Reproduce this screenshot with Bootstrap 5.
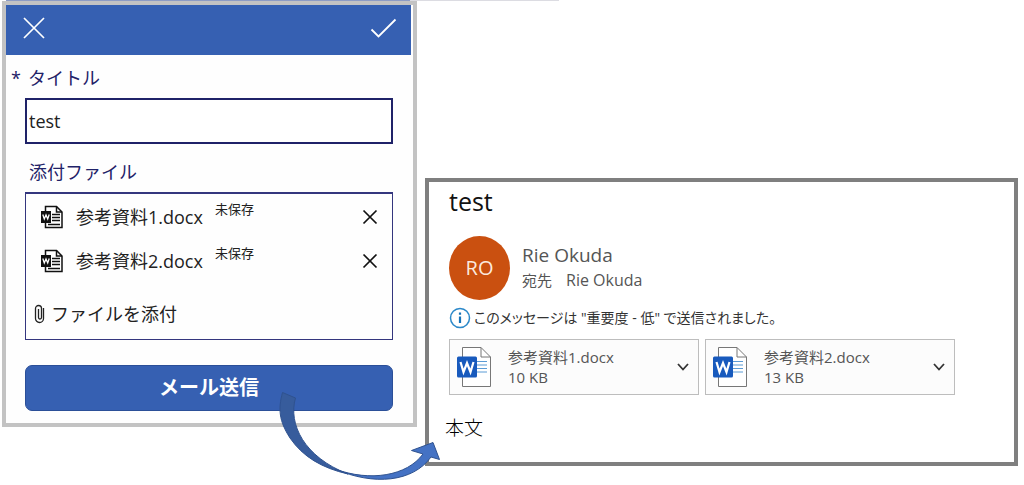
<!DOCTYPE html>
<html lang="ja">
<head>
<meta charset="utf-8">
<meta name="viewport" content="width=device-width, initial-scale=1">
<title>メール送信</title>
<link href="https://cdn.jsdelivr.net/npm/bootstrap@5.3.0/dist/css/bootstrap.min.css" rel="stylesheet">
<style>
  body { font-family: "Open Sans", "Noto Sans CJK JP", sans-serif; color: #222; background: #fff; }
  .top-rule { height: 1px; width: 54%; background: linear-gradient(90deg, #8d9cc4 73%, #dcdce2 73%); margin-left: 6px; }
  .stage { gap: 8px; padding: 0 6px 18px 2px; }
  .form-pane { flex: 405 1 0; min-width: 0; border: 4px solid #c3c3c3; padding-right: 2px; background: #fefefe; }
  .mail-pane { flex: 553 1 0; min-width: 0; border: 4px solid #7f7f7f; margin-top: 177px; padding: 2px 16px 20px; }
  .form-bar { background: #3660b2; height: 50px; padding: 0 14px 4px 16px; }
  .bare { background: none; border: 0; padding: 0; line-height: 0; }
  .form-body { padding: 11px 18px 12px 19px; }
  .navy { color: #1f2268; }
  .fs-18 { font-size: 18px; line-height: 24px; }
  .fs-15 { font-size: 15px; line-height: 20px; }
  .fs-13 { font-size: 13px; line-height: 20px; }
  .star { width: 16px; margin-left: -14px; margin-right: 1px; }
  .title-input { border: 2px solid #1f2268; border-radius: 0; height: 46px; padding: 0 2px; font-size: 18px; color: #222; }
  .file-box { border: 1px solid #34367e; border-top-width: 2px; padding: 1px 14px 13px 8px; margin-bottom: 25px; }
  .file-row { height: 44px; padding-left: 6px; }
  .add-file { margin-top: 19px; gap: 6px; }
  .send { background: #3660b2; border: 1px solid #2b4f98; border-radius: 7px; height: 46px; font-size: 20px; line-height: 24px; font-weight: 700; color: #fff; }
  .send:hover { background: #2f56a3; color: #fff; }
  .flow-arrow { right: -30px; bottom: -62px; pointer-events: none; z-index: 2; }
  .subject { font-size: 25px; line-height: 34px; color: #111; margin-bottom: 18px; }
  .avatar { width: 61px; height: 64px; background: #ca5010; color: #fbe9df; font-size: 20px; border-radius: 50%; }
  .sender { font-size: 19px; line-height: 24px; }
  .recipient { font-size: 16px; line-height: 26px; }
  .recipient span { font-size: 15px; margin-right: 14px; }
  .notice { font-size: 14px; line-height: 20px; font-feature-settings: "palt"; color: #333; margin: 7px 0 10px; gap: 3px; }
  .soft { color: #555; }
  .attach { flex: 0 1 250px; height: 56px; border: 1px solid #bdbdbd; background: #fcfcfc; padding: 0 8px 0 6px; min-width: 0; }
  .attach-list { gap: 6px; }
  .message { font-size: 19px; line-height: 28px; font-weight: 300; color: #000; margin: 19px 0 0; }
</style>
</head>
<body>
<svg class="d-none" aria-hidden="true">
  <symbol id="cross" viewBox="0 0 22 22"><path d="M1 1 21 21M21 1 1 21" fill="none" stroke="currentColor" stroke-width="1.700"/></symbol>
  <symbol id="doc-dark" viewBox="0 0 24 24">
    <path d="M5.500 1.500H16.500L22 7V22.500H5.500Z" fill="#fff" stroke="#111" stroke-width="1.500"/>
    <path d="M16.500 1.500V7H22" fill="none" stroke="#111" stroke-width="1.500"/>
    <path d="M12 9.500H20M12 12.500H20M12 15.500H20M8 19.500H20" stroke="#111" stroke-width="1.300"/>
    <path d="M1 6H11V18H1Z" fill="#111"/>
    <path d="M2.800 9.500 4.300 14 6 10 7.700 14 9.200 9.500" fill="none" stroke="#fff" stroke-width="1.300"/>
  </symbol>
  <symbol id="doc-blue" viewBox="0 0 36 42">
    <path d="M6.500 1.500H25L34.500 11V40.500H6.500Z" fill="#fff" stroke="#777"/>
    <path d="M25 1.500V11H34.500" fill="none" stroke="#777"/>
    <path d="M21 15.500H31M21 19H31M21 22.500H31M21 26H31" stroke="#5b9bd5"/>
    <rect x="1" y="10.500" width="20" height="21" rx="1.500" fill="#185abd"/>
    <path d="M4.500 16 7.500 26 11 17 14.500 26 17.500 16" fill="none" stroke="#fff" stroke-width="2.200"/>
  </symbol>
</svg>

<div class="top-rule"></div>
<main class="stage d-flex align-items-start">
  <form class="form-pane position-relative" onsubmit="return false">
    <div class="form-bar d-flex justify-content-between align-items-center text-white">
      <button type="button" class="bare text-white" aria-label="閉じる"><svg width="24" height="22"><use href="#cross"/></svg></button>
      <button type="button" class="bare text-white" aria-label="保存"><svg width="27" height="22" viewBox="0 0 27 22"><path d="M1.500 12.500 8.500 19.500 25.500 2.500" fill="none" stroke="currentColor" stroke-width="1.800"/></svg></button>
    </div>
    <div class="form-body">
      <div class="d-flex fs-18 navy mb-2">
        <span class="star" aria-hidden="true">*</span><label for="title">タイトル</label>
      </div>
      <input id="title" type="text" class="form-control title-input" value="test">
      <div class="fs-18 navy mt-3 mb-2 ps-1">添付ファイル</div>
      <div class="file-box">
        <div class="file-row d-flex align-items-center">
          <svg width="24" height="24" class="flex-shrink-0"><use href="#doc-dark"/></svg>
          <span class="fs-18 ms-2 ps-1">参考資料1.docx</span>
          <span class="fs-13 ms-2 ps-1 mb-3">未保存</span>
          <button type="button" class="bare ms-auto" aria-label="参考資料1.docxを削除"><svg width="16" height="16" viewBox="0 0 16 16"><path d="M1.500 1.500 14.500 14.500M14.500 1.500 1.500 14.500" stroke="#111" stroke-width="1.700"/></svg></button>
        </div>
        <div class="file-row d-flex align-items-center">
          <svg width="24" height="24" class="flex-shrink-0"><use href="#doc-dark"/></svg>
          <span class="fs-18 ms-2 ps-1">参考資料2.docx</span>
          <span class="fs-13 ms-2 ps-1 mb-3">未保存</span>
          <button type="button" class="bare ms-auto" aria-label="参考資料2.docxを削除"><svg width="16" height="16" viewBox="0 0 16 16"><path d="M1.500 1.500 14.500 14.500M14.500 1.500 1.500 14.500" stroke="#111" stroke-width="1.700"/></svg></button>
        </div>
        <button type="button" class="bare add-file d-flex align-items-center fs-18 text-reset">
          <svg width="11" height="20" viewBox="0 0 11 20"><path d="M9.500 4V14.500A4 4 0 0 1 1.500 14.500V4.500A3 3 0 0 1 7.500 4.500V13.500A1.500 1.500 0 0 1 4.500 13.500V5" fill="none" stroke="#222" stroke-width="1.300"/></svg>
          <span>ファイルを添付</span>
        </button>
      </div>
      <button type="submit" class="btn send w-100 d-block py-0">メール送信</button>
    </div>
    <svg class="flow-arrow position-absolute" width="165" height="95" viewBox="278 390 165 95" aria-hidden="true">
      <path d="M282.500 392.500 295.500 398C288 424 304 457 348 474C322 468 303 457 290 438C279 421 278 409 282.500 392.500Z" fill="#375c9c" stroke="#2f528f"/>
      <path d="M335 469C370 482 407 476 423 454L411.500 450.500 433 442.500 439.500 459.500 431 457C413 482 374 486 335 469Z" fill="#4472c4" stroke="#2f528f"/>
    </svg>
  </form>

  <section class="mail-pane">
    <div class="ps-1">
      <h1 class="subject fw-normal">test</h1>
      <div class="d-flex align-items-center">
        <div class="avatar d-flex align-items-center justify-content-center flex-shrink-0">RO</div>
        <div class="ms-2 ps-1">
          <div class="sender soft">Rie Okuda</div>
          <div class="recipient soft"><span>宛先</span>Rie Okuda</div>
        </div>
      </div>
      <div class="notice d-flex align-items-center">
        <svg width="22" height="22" viewBox="0 0 22 22" class="flex-shrink-0"><circle cx="11" cy="11" r="9.500" fill="#fff" stroke="#2b88c9" stroke-width="1.500"/><path d="M11 9.500V16M11 5.500V7.800" stroke="#1673b8" stroke-width="2.200"/></svg>
        <span>このメッセージは "重要度 - 低" で送信されました。</span>
      </div>
      <div class="attach-list d-flex">
        <div class="attach d-flex align-items-center">
          <svg width="36" height="42" class="flex-shrink-0"><use href="#doc-blue"/></svg>
          <div class="fs-15 ms-3 soft">参考資料1.docx<br>10 KB</div>
          <button type="button" class="bare ms-auto" aria-label="添付ファイルのメニュー"><svg width="14" height="10" viewBox="0 0 14 10"><path d="M2 2 7 7.500 12 2" fill="none" stroke="#333" stroke-width="1.800"/></svg></button>
        </div>
        <div class="attach d-flex align-items-center">
          <svg width="36" height="42" class="flex-shrink-0"><use href="#doc-blue"/></svg>
          <div class="fs-15 ms-3 soft">参考資料2.docx<br>13 KB</div>
          <button type="button" class="bare ms-auto" aria-label="添付ファイルのメニュー"><svg width="14" height="10" viewBox="0 0 14 10"><path d="M2 2 7 7.500 12 2" fill="none" stroke="#333" stroke-width="1.800"/></svg></button>
        </div>
      </div>
    </div>
    <p class="message">本文</p>
  </section>
</main>
<script src="https://cdn.jsdelivr.net/npm/bootstrap@5.3.0/dist/js/bootstrap.bundle.min.js"></script>
</body>
</html>
